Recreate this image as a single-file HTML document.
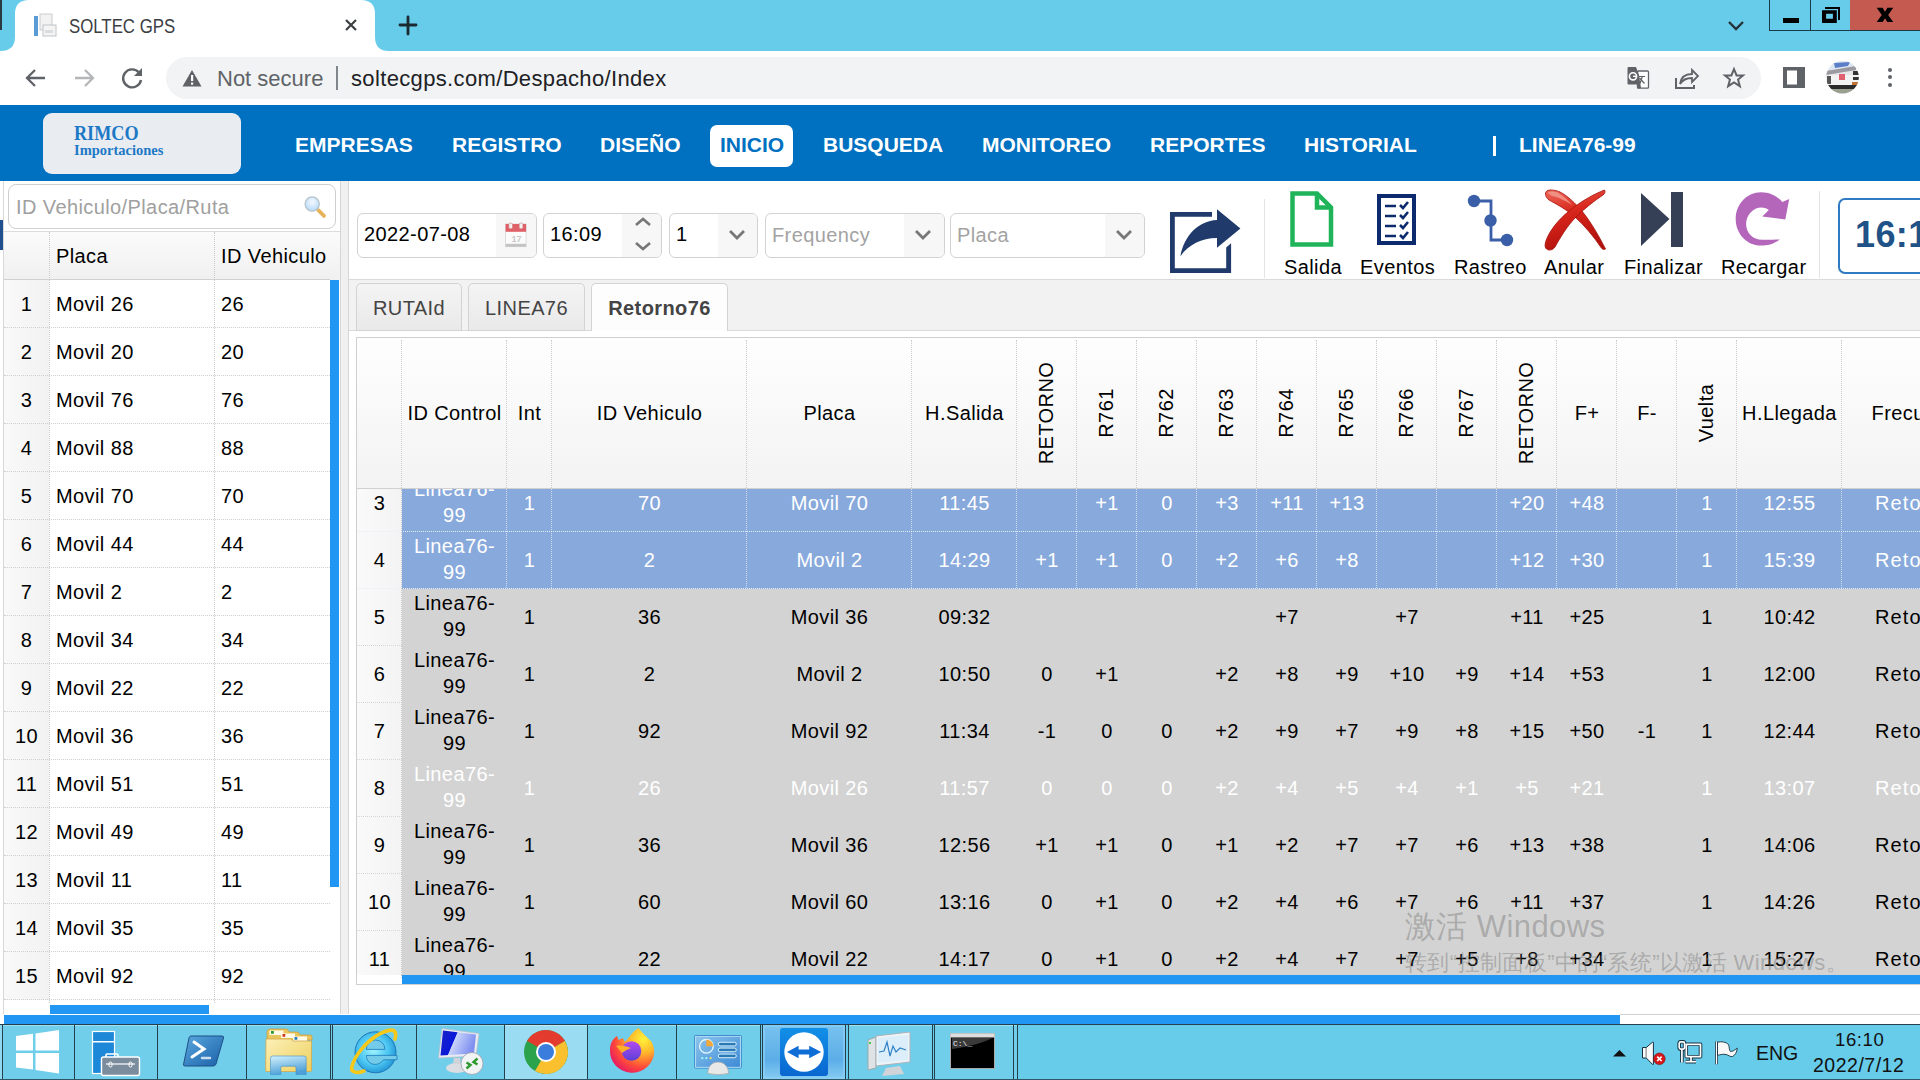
<!DOCTYPE html>
<html><head><meta charset="utf-8"><title>SOLTEC GPS</title>
<style>
*{margin:0;padding:0;box-sizing:border-box}
html,body{width:1920px;height:1080px;overflow:hidden;background:#fff;font-family:"Liberation Sans",sans-serif;color:#000}
.a{position:absolute}
.t{position:absolute;white-space:nowrap;line-height:1;letter-spacing:0.4px}
.nv{top:134px;font-size:21px;font-weight:bold;color:#fff;letter-spacing:0px}
</style></head><body>
<div class="a" style="left:0px;top:0px;width:1920px;height:51px;background:#67cbea"></div>
<div class="a" style="left:0px;top:0px;width:2px;height:30px;background:#2a3a40"></div>
<svg class="a" style="left:0;top:0" width="400" height="51"><path d="M0 51 Q15 51 15 37 L15 14 Q15 0 29 0 L361 0 Q375 0 375 14 L375 37 Q375 51 389 51 Z" fill="#fff"/></svg>
<svg class="a" style="left:32px;top:12px" width="26" height="26"><rect x="2" y="4" width="4" height="20" fill="#5b9bd5"/><rect x="8" y="2" width="12" height="16" fill="#f2f2f2" stroke="#c8ccd0"/><rect x="11" y="13" width="13" height="11" fill="#f4f4f4" stroke="#c0c4c8"/><rect x="13" y="18" width="8" height="3" fill="#d8dde2"/></svg>
<div class="t" style="left:69px;top:16px;font-size:20px;color:#3c4043;letter-spacing:0;transform:scaleX(0.84);transform-origin:0 0">SOLTEC GPS</div>
<svg class="a" style="left:344px;top:18px" width="14" height="14"><path d="M2 2L12 12M12 2L2 12" stroke="#3c4043" stroke-width="2.2"/></svg>
<svg class="a" style="left:397px;top:14px" width="22" height="22"><path d="M11 3V20M3 11H19" stroke="#1a2a30" stroke-width="2.8" stroke-linecap="round"/></svg>
<svg class="a" style="left:1727px;top:19px" width="18" height="13"><path d="M2 3L9 10L16 3" stroke="#263238" stroke-width="2.4" fill="none"/></svg>
<div class="a" style="left:1769px;top:0px;width:42px;height:31px;border:1px solid #1b3b4b;border-top:none;background:#67cbea"></div>
<div class="a" style="left:1783px;top:18px;width:16px;height:5px;background:#000"></div>
<div class="a" style="left:1811px;top:0px;width:40px;height:31px;border:1px solid #1b3b4b;border-top:none;border-left:none;background:#67cbea"></div>
<svg class="a" style="left:1810px;top:0px" width="40" height="30"><path d="M15 7H30V20H28V9H15Z" fill="#000"/><path d="M12 10.2H26.8V23H12Z M16.1 13.8V18.8H22.9V13.8Z" fill="#000" fill-rule="evenodd"/></svg>
<div class="a" style="left:1850px;top:0px;width:70px;height:31px;background:#c55a50;border-bottom:1px solid #1b3b4b"></div>
<svg class="a" style="left:1860px;top:0px" width="60" height="30"><path d="M16.7 7.8H22.6L25 11.8L27.4 7.8H33.2L28.2 15L33.2 22.1H27.3L25 18.2L22.7 22.1H16.7L21.8 15Z" fill="#000"/></svg>
<div class="a" style="left:0px;top:51px;width:1920px;height:54px;background:#fff"></div>
<svg class="a" style="left:24px;top:66px" width="24" height="24"><path d="M21 12H4M11 4L3 12L11 20" stroke="#5f6368" stroke-width="2.3" fill="none"/></svg>
<svg class="a" style="left:72px;top:66px" width="24" height="24"><path d="M3 12H20M13 4L21 12L13 20" stroke="#b4b6b9" stroke-width="2.3" fill="none"/></svg>
<svg class="a" style="left:120px;top:66px" width="26" height="24"><path d="M19 6.5A9 9 0 1 0 21 14" stroke="#5f6368" stroke-width="2.4" fill="none"/><path d="M22 2V10H14Z" fill="#5f6368"/></svg>
<div class="a" style="left:166px;top:57px;width:1595px;height:42px;background:#f1f3f4;border-radius:21px"></div>
<svg class="a" style="left:182px;top:69px" width="20" height="18"><path d="M10 1L19.5 17.5H0.5Z" fill="#5f6368"/><rect x="9" y="6" width="2.2" height="6" fill="#fff"/><rect x="9" y="13.5" width="2.2" height="2.2" fill="#fff"/></svg>
<div class="t" style="left:217px;top:68px;font-size:22px;color:#5f6368;letter-spacing:0">Not secure</div>
<div class="a" style="left:336px;top:66px;width:2px;height:24px;background:#80868b"></div>
<div class="t" style="left:351px;top:68px;font-size:22px;color:#202124;letter-spacing:0.35px">soltecgps.com/Despacho/Index</div>
<svg class="a" style="left:1620px;top:60px" width="40" height="35"><rect x="17.5" y="11" width="11" height="17.2" rx="1" fill="#fff" stroke="#5f6368" stroke-width="1.3"/><path d="M8.5 7.1H16L19 15L21 28L17.5 28.5L17 24.6H8.5Q7.5 24.6 7.5 23.6V8.1Q7.5 7.1 8.5 7.1Z" fill="#5f6368"/><circle cx="13" cy="16.3" r="3.6" fill="none" stroke="#fff" stroke-width="1.6"/><path d="M13 16.3H16.8" stroke="#fff" stroke-width="1.5"/><path d="M19 16.5H25M22.5 16L20 23.5M19.5 18L24.5 23.5" stroke="#5f6368" stroke-width="1.2" fill="none"/></svg>
<svg class="a" style="left:1674px;top:66px" width="26" height="24"><path d="M2 12V22H20V19" stroke="#5f6368" stroke-width="2" fill="none"/><path d="M6 18C7 11 12 8 18 8V4L24 10L18 16V12C13 12 9 13 6 18Z" fill="none" stroke="#5f6368" stroke-width="1.8"/></svg>
<svg class="a" style="left:1722px;top:66px" width="24" height="24"><path transform="translate(1.2 1.3) scale(0.9)" d="M12 2L14.9 9H22L16.5 13.6L18.5 21L12 16.8L5.5 21L7.5 13.6L2 9H9.1Z" fill="none" stroke="#5f6368" stroke-width="2.2" stroke-linejoin="miter"/></svg>
<svg class="a" style="left:1783px;top:67px" width="22" height="21"><rect x="0" y="0" width="22" height="21" fill="#5f6368"/><rect x="4" y="3.5" width="10" height="14" fill="#fff"/></svg>
<svg class="a" style="left:1826px;top:61px" width="34" height="34"><defs><clipPath id="av"><circle cx="16.5" cy="16.2" r="16.3"/></clipPath></defs><g clip-path="url(#av)"><rect width="34" height="34" fill="#e6e6e8"/><path d="M0 0H34V5L0 10Z" fill="#dfe6f2"/><path d="M8 2L24 1L22 5L9 7Z" fill="#5a7fc8"/><path d="M0 10L30 5V9L0 14Z" fill="#9a9aa0"/><rect x="0" y="14" width="34" height="10" fill="#f2f2f2"/><rect x="1" y="15" width="4" height="8" fill="#555"/><rect x="13" y="13" width="6" height="6" fill="#e06070"/><rect x="27" y="10" width="6" height="4" fill="#333"/><rect x="27" y="16" width="6" height="3" fill="#333"/><rect x="26" y="21" width="8" height="3" fill="#c07030"/><rect x="0" y="24" width="34" height="4" fill="#2a2a2a"/><rect x="0" y="28" width="34" height="6" fill="#9aa090"/></g></svg>
<div class="a" style="left:1888px;top:68px;width:4px;height:4px;background:#5f6368;border-radius:2px"></div>
<div class="a" style="left:1888px;top:75px;width:4px;height:4px;background:#5f6368;border-radius:2px"></div>
<div class="a" style="left:1888px;top:83px;width:4px;height:4px;background:#5f6368;border-radius:2px"></div>
<div class="a" style="left:0px;top:105px;width:1920px;height:76px;background:#0070c0"></div>
<div class="a" style="left:43px;top:113px;width:198px;height:61px;background:#e9edf2;border-radius:9px"></div>
<div class="t" style="left:74px;top:123px;font-family:'Liberation Serif',serif;font-weight:bold;font-size:21px;color:#1d78c6;letter-spacing:0;transform:scaleX(0.865);transform-origin:0 0">RIMCO</div>
<div class="t" style="left:74px;top:143px;font-family:'Liberation Serif',serif;font-weight:bold;font-size:14.5px;color:#1d78c6;letter-spacing:0">Importaciones</div>
<div class="t nv" style="left:295px">EMPRESAS</div>
<div class="t nv" style="left:452px">REGISTRO</div>
<div class="t nv" style="left:600px">DISEÑO</div>
<div class="t nv" style="left:823px">BUSQUEDA</div>
<div class="t nv" style="left:982px">MONITOREO</div>
<div class="t nv" style="left:1150px">REPORTES</div>
<div class="t nv" style="left:1304px">HISTORIAL</div>
<div class="t nv" style="left:1519px">LINEA76-99</div>
<div class="a" style="left:710px;top:125px;width:83px;height:42px;background:#fff;border-radius:7px"></div>
<div class="t nv" style="left:720px;color:#0070c0">INICIO</div>
<div class="a" style="left:1493px;top:136px;width:3px;height:20px;background:#fff"></div>
<div class="a" style="left:0px;top:181px;width:340px;height:834px;background:#fff"></div>
<div class="a" style="left:0px;top:220px;width:3px;height:30px;background:#1f4f8f"></div>
<div class="a" style="left:3px;top:181px;width:1px;height:834px;background:#d8d8d8"></div>
<div class="a" style="left:8px;top:184px;width:328px;height:45px;border:1px solid #cfcfcf;border-radius:8px;background:#fff"></div>
<div class="t" style="left:16px;top:197px;font-size:20px;color:#a0a0a0">ID Vehiculo/Placa/Ruta</div>
<svg class="a" style="left:290px;top:185px" width="45" height="45"><defs><radialGradient id="lens" cx="0.5" cy="0.35" r="0.6"><stop offset="0" stop-color="#f4f8ff"/><stop offset="1" stop-color="#b9dcf8"/></radialGradient></defs><path d="M28.3 25.2L34 30.9" stroke="#e5b45a" stroke-width="3.8" stroke-linecap="round"/><circle cx="22.2" cy="19" r="7.1" fill="url(#lens)" stroke="#b5c2cc" stroke-width="1.3"/></svg>
<div class="a" style="left:4px;top:231px;width:336px;height:1px;background:#dcdcdc"></div>
<div class="a" style="left:4px;top:232px;width:326px;height:48px;background:linear-gradient(#fbfbfb,#f0f0f0)"></div>
<div class="a" style="left:4px;top:279px;width:336px;height:1px;background:#d0d0d0"></div>
<div class="t" style="left:56px;top:246px;font-size:20px">Placa</div>
<div class="t" style="left:221px;top:246px;font-size:20px">ID Vehiculo</div>
<div class="a" style="left:49px;top:232px;width:0px;height:48px;border-left:1px dotted #c8c8c8"></div>
<div class="a" style="left:214px;top:232px;width:0px;height:48px;border-left:1px dotted #c8c8c8"></div>
<div class="a" style="left:330px;top:232px;width:10px;height:48px;background:linear-gradient(#fbfbfb,#f0f0f0)"></div>
<div class="a" style="left:4px;top:280px;width:45px;height:48px;background:linear-gradient(90deg,#f9f9f9,#f2f2f2)"></div>
<div class="a" style="left:4px;top:327px;width:326px;height:0px;border-top:1px dotted #cfcfcf"></div>
<div class="t" style="left:4px;top:294px;width:45px;text-align:center;font-size:20px">1</div>
<div class="t" style="left:56px;top:294px;font-size:20px">Movil 26</div>
<div class="t" style="left:221px;top:294px;font-size:20px">26</div>
<div class="a" style="left:4px;top:328px;width:45px;height:48px;background:linear-gradient(90deg,#f9f9f9,#f2f2f2)"></div>
<div class="a" style="left:4px;top:375px;width:326px;height:0px;border-top:1px dotted #cfcfcf"></div>
<div class="t" style="left:4px;top:342px;width:45px;text-align:center;font-size:20px">2</div>
<div class="t" style="left:56px;top:342px;font-size:20px">Movil 20</div>
<div class="t" style="left:221px;top:342px;font-size:20px">20</div>
<div class="a" style="left:4px;top:376px;width:45px;height:48px;background:linear-gradient(90deg,#f9f9f9,#f2f2f2)"></div>
<div class="a" style="left:4px;top:423px;width:326px;height:0px;border-top:1px dotted #cfcfcf"></div>
<div class="t" style="left:4px;top:390px;width:45px;text-align:center;font-size:20px">3</div>
<div class="t" style="left:56px;top:390px;font-size:20px">Movil 76</div>
<div class="t" style="left:221px;top:390px;font-size:20px">76</div>
<div class="a" style="left:4px;top:424px;width:45px;height:48px;background:linear-gradient(90deg,#f9f9f9,#f2f2f2)"></div>
<div class="a" style="left:4px;top:471px;width:326px;height:0px;border-top:1px dotted #cfcfcf"></div>
<div class="t" style="left:4px;top:438px;width:45px;text-align:center;font-size:20px">4</div>
<div class="t" style="left:56px;top:438px;font-size:20px">Movil 88</div>
<div class="t" style="left:221px;top:438px;font-size:20px">88</div>
<div class="a" style="left:4px;top:472px;width:45px;height:48px;background:linear-gradient(90deg,#f9f9f9,#f2f2f2)"></div>
<div class="a" style="left:4px;top:519px;width:326px;height:0px;border-top:1px dotted #cfcfcf"></div>
<div class="t" style="left:4px;top:486px;width:45px;text-align:center;font-size:20px">5</div>
<div class="t" style="left:56px;top:486px;font-size:20px">Movil 70</div>
<div class="t" style="left:221px;top:486px;font-size:20px">70</div>
<div class="a" style="left:4px;top:520px;width:45px;height:48px;background:linear-gradient(90deg,#f9f9f9,#f2f2f2)"></div>
<div class="a" style="left:4px;top:567px;width:326px;height:0px;border-top:1px dotted #cfcfcf"></div>
<div class="t" style="left:4px;top:534px;width:45px;text-align:center;font-size:20px">6</div>
<div class="t" style="left:56px;top:534px;font-size:20px">Movil 44</div>
<div class="t" style="left:221px;top:534px;font-size:20px">44</div>
<div class="a" style="left:4px;top:568px;width:45px;height:48px;background:linear-gradient(90deg,#f9f9f9,#f2f2f2)"></div>
<div class="a" style="left:4px;top:615px;width:326px;height:0px;border-top:1px dotted #cfcfcf"></div>
<div class="t" style="left:4px;top:582px;width:45px;text-align:center;font-size:20px">7</div>
<div class="t" style="left:56px;top:582px;font-size:20px">Movil 2</div>
<div class="t" style="left:221px;top:582px;font-size:20px">2</div>
<div class="a" style="left:4px;top:616px;width:45px;height:48px;background:linear-gradient(90deg,#f9f9f9,#f2f2f2)"></div>
<div class="a" style="left:4px;top:663px;width:326px;height:0px;border-top:1px dotted #cfcfcf"></div>
<div class="t" style="left:4px;top:630px;width:45px;text-align:center;font-size:20px">8</div>
<div class="t" style="left:56px;top:630px;font-size:20px">Movil 34</div>
<div class="t" style="left:221px;top:630px;font-size:20px">34</div>
<div class="a" style="left:4px;top:664px;width:45px;height:48px;background:linear-gradient(90deg,#f9f9f9,#f2f2f2)"></div>
<div class="a" style="left:4px;top:711px;width:326px;height:0px;border-top:1px dotted #cfcfcf"></div>
<div class="t" style="left:4px;top:678px;width:45px;text-align:center;font-size:20px">9</div>
<div class="t" style="left:56px;top:678px;font-size:20px">Movil 22</div>
<div class="t" style="left:221px;top:678px;font-size:20px">22</div>
<div class="a" style="left:4px;top:712px;width:45px;height:48px;background:linear-gradient(90deg,#f9f9f9,#f2f2f2)"></div>
<div class="a" style="left:4px;top:759px;width:326px;height:0px;border-top:1px dotted #cfcfcf"></div>
<div class="t" style="left:4px;top:726px;width:45px;text-align:center;font-size:20px">10</div>
<div class="t" style="left:56px;top:726px;font-size:20px">Movil 36</div>
<div class="t" style="left:221px;top:726px;font-size:20px">36</div>
<div class="a" style="left:4px;top:760px;width:45px;height:48px;background:linear-gradient(90deg,#f9f9f9,#f2f2f2)"></div>
<div class="a" style="left:4px;top:807px;width:326px;height:0px;border-top:1px dotted #cfcfcf"></div>
<div class="t" style="left:4px;top:774px;width:45px;text-align:center;font-size:20px">11</div>
<div class="t" style="left:56px;top:774px;font-size:20px">Movil 51</div>
<div class="t" style="left:221px;top:774px;font-size:20px">51</div>
<div class="a" style="left:4px;top:808px;width:45px;height:48px;background:linear-gradient(90deg,#f9f9f9,#f2f2f2)"></div>
<div class="a" style="left:4px;top:855px;width:326px;height:0px;border-top:1px dotted #cfcfcf"></div>
<div class="t" style="left:4px;top:822px;width:45px;text-align:center;font-size:20px">12</div>
<div class="t" style="left:56px;top:822px;font-size:20px">Movil 49</div>
<div class="t" style="left:221px;top:822px;font-size:20px">49</div>
<div class="a" style="left:4px;top:856px;width:45px;height:48px;background:linear-gradient(90deg,#f9f9f9,#f2f2f2)"></div>
<div class="a" style="left:4px;top:903px;width:326px;height:0px;border-top:1px dotted #cfcfcf"></div>
<div class="t" style="left:4px;top:870px;width:45px;text-align:center;font-size:20px">13</div>
<div class="t" style="left:56px;top:870px;font-size:20px">Movil 11</div>
<div class="t" style="left:221px;top:870px;font-size:20px">11</div>
<div class="a" style="left:4px;top:904px;width:45px;height:48px;background:linear-gradient(90deg,#f9f9f9,#f2f2f2)"></div>
<div class="a" style="left:4px;top:951px;width:326px;height:0px;border-top:1px dotted #cfcfcf"></div>
<div class="t" style="left:4px;top:918px;width:45px;text-align:center;font-size:20px">14</div>
<div class="t" style="left:56px;top:918px;font-size:20px">Movil 35</div>
<div class="t" style="left:221px;top:918px;font-size:20px">35</div>
<div class="a" style="left:4px;top:952px;width:45px;height:48px;background:linear-gradient(90deg,#f9f9f9,#f2f2f2)"></div>
<div class="a" style="left:4px;top:999px;width:326px;height:0px;border-top:1px dotted #cfcfcf"></div>
<div class="t" style="left:4px;top:966px;width:45px;text-align:center;font-size:20px">15</div>
<div class="t" style="left:56px;top:966px;font-size:20px">Movil 92</div>
<div class="t" style="left:221px;top:966px;font-size:20px">92</div>
<div class="a" style="left:49px;top:280px;width:0px;height:723px;border-left:1px dotted #cfcfcf"></div>
<div class="a" style="left:214px;top:280px;width:0px;height:723px;border-left:1px dotted #cfcfcf"></div>
<div class="a" style="left:330px;top:280px;width:9px;height:607px;background:#2196f3"></div>
<div class="a" style="left:50px;top:1005px;width:159px;height:9px;background:#2196f3"></div>
<div class="a" style="left:340px;top:181px;width:9px;height:834px;background:#f0f0f0;border-left:1px solid #d6d6d6;border-right:1px solid #d6d6d6"></div>
<div class="a" style="left:349px;top:181px;width:1571px;height:98px;background:#fff"></div>
<div class="a" style="left:357px;top:213px;width:180px;height:45px;border:1px solid #d2d2d2;border-radius:6px;background:#fff;overflow:hidden"></div>
<div class="a" style="left:496px;top:214px;width:40px;height:43px;background:#f7f7f7;border-radius:0 5px 5px 0"></div>
<div class="t" style="left:364px;top:224px;font-size:20px;color:#000">2022-07-08</div>
<svg class="a" style="left:495px;top:213px" width="40" height="44"><rect x="10.6" y="11" width="20.5" height="22.7" fill="#fbfbfb" stroke="#d0d0d0" stroke-width="0.7"/><rect x="10.6" y="30.8" width="20.5" height="3" fill="#c4c4c4"/><rect x="10.6" y="11" width="20.5" height="7.8" fill="#e06068"/><rect x="13.8" y="10" width="3.7" height="5.8" rx="1.5" fill="#f4f0f0" stroke="#c07070" stroke-width="0.5"/><rect x="24.2" y="10" width="3.7" height="5.8" rx="1.5" fill="#f4f0f0" stroke="#c07070" stroke-width="0.5"/><text x="16.5" y="28.5" font-size="9" fill="#c8c8c8" font-family="Liberation Sans" font-weight="bold">17</text></svg>
<div class="a" style="left:543px;top:213px;width:119px;height:45px;border:1px solid #d2d2d2;border-radius:6px;background:#fff;overflow:hidden"></div>
<div class="a" style="left:622px;top:214px;width:39px;height:43px;background:#f7f7f7;border-radius:0 5px 5px 0"></div>
<div class="t" style="left:550px;top:224px;font-size:20px;color:#000">16:09</div>
<svg class="a" style="left:633px;top:216px" width="20" height="38"><path d="M3 9L10 3L17 9M3 27L10 33L17 27" stroke="#777" stroke-width="2.6" fill="none"/></svg>
<div class="a" style="left:669px;top:213px;width:89px;height:45px;border:1px solid #d2d2d2;border-radius:6px;background:#fff;overflow:hidden"></div>
<div class="a" style="left:718px;top:214px;width:39px;height:43px;background:#f7f7f7;border-radius:0 5px 5px 0"></div>
<div class="t" style="left:676px;top:224px;font-size:20px;color:#000">1</div>
<div class="a" style="left:765px;top:213px;width:180px;height:45px;border:1px solid #d2d2d2;border-radius:6px;background:#fff;overflow:hidden"></div>
<div class="a" style="left:904px;top:214px;width:40px;height:43px;background:#f7f7f7;border-radius:0 5px 5px 0"></div>
<div class="t" style="left:772px;top:225px;font-size:20px;color:#a3a3a3">Frequency</div>
<div class="a" style="left:950px;top:213px;width:195px;height:45px;border:1px solid #d2d2d2;border-radius:6px;background:#fff;overflow:hidden"></div>
<div class="a" style="left:1105px;top:214px;width:39px;height:43px;background:#f7f7f7;border-radius:0 5px 5px 0"></div>
<div class="t" style="left:957px;top:225px;font-size:20px;color:#a3a3a3">Placa</div>
<svg class="a" style="left:727px;top:228px" width="20" height="14"><path d="M3 3L10 10L17 3" stroke="#777" stroke-width="2.8" fill="none"/></svg>
<svg class="a" style="left:913px;top:228px" width="20" height="14"><path d="M3 3L10 10L17 3" stroke="#777" stroke-width="2.8" fill="none"/></svg>
<svg class="a" style="left:1114px;top:228px" width="20" height="14"><path d="M3 3L10 10L17 3" stroke="#777" stroke-width="2.8" fill="none"/></svg>
<svg class="a" style="left:1160px;top:200px" width="90" height="80"><path d="M10 12H52V16.8H14.8V68.2H66.2V47.4L71.1 43.3V73H10Z" fill="#1f3a6b"/><path d="M20.4 56.3C24 36 38 21 57 20V9.3L80.4 28.5L57 47.8V38.1C42 38 28 45 20.4 56.3Z" fill="#1f3a6b"/></svg>
<div class="a" style="left:1264px;top:199px;width:1px;height:79px;background:#e3e3e3"></div>
<svg class="a" style="left:1288px;top:189px" width="48" height="60"><path d="M4.5 4.5H29L43 18.5V55.5H4.5Z" fill="#fff" stroke="#1fb45a" stroke-width="4.5" stroke-linejoin="miter"/><path d="M29 4.5V18.5H43" fill="none" stroke="#1fb45a" stroke-width="4.5"/></svg>
<svg class="a" style="left:1376px;top:193px" width="42" height="54"><rect x="3" y="3" width="35" height="47" fill="#fff" stroke="#0d2a6e" stroke-width="4"/><g stroke="#0d2a6e" stroke-width="2.6" fill="none"><path d="M9 13H20M9 23H20M9 33H20M9 43H20"/><path d="M24 12L27 15L32 9M24 22L27 25L32 19M24 32L27 35L32 29M24 42L27 45L32 39"/></g></svg>
<svg class="a" style="left:1464px;top:192px" width="52" height="58"><path d="M10 9H27V48H43" stroke="#3a5fa8" stroke-width="2.8" fill="none"/><circle cx="10" cy="9" r="6.2" fill="#3a5fa8"/><circle cx="26.5" cy="28.5" r="6.2" fill="#3a5fa8"/><circle cx="43" cy="48" r="6.2" fill="#3a5fa8"/></svg>
<svg class="a" style="left:1538px;top:184px" width="74" height="70"><defs><linearGradient id="rg" x1="0" y1="0" x2="0.3" y2="1"><stop offset="0" stop-color="#ee6a5c"/><stop offset="0.45" stop-color="#d8261c"/><stop offset="1" stop-color="#b3120d"/></linearGradient></defs><g fill="url(#rg)" stroke="#a5100b" stroke-width="0.8"><path d="M7.5 10C7 5 15 5 22 8C30 12 38 20 44 27C52 37 60 50 67.5 65C65.5 66 64 65 63 63.5C56 53 47 42 37 33C28 25 18 20 11 16C9 14.5 7.7 12.5 7.5 10Z"/><path d="M66.5 6C67.5 7.5 67 9.5 65 11C56 17 46 25 38 33C29 42 22 54 17 63C15 66 11 67 8.5 65C6 63 7 58 10 52C15 42 24 32 35 24C44 17 56 10 66.5 6Z"/></g><path d="M10 9C12 7 17 7 22 10C27 13 31 17 34 21C28 17 20 13 14 12Z" fill="#f5a59a" opacity="0.7"/></svg>
<svg class="a" style="left:1638px;top:190px" width="48" height="60"><path d="M3 3L31.5 29L3 56Z" fill="#353f55"/><rect x="33" y="2" width="12" height="55" fill="#353f55"/></svg>
<svg class="a" style="left:1726px;top:186px" width="74" height="70"><path d="M53.8 53.5C47 58.5 41 59.6 35 59.6C20 59.6 9.7 47 9.7 33C9.7 18 21 6.2 35 6.2C44 6.2 51 10 56.4 15.9L63.2 13L59.3 33.4L36.3 30.5L42.8 24C40 22 38 21.4 35.5 21.4C27 21.4 20.1 29 20.1 38C20.1 47 27 53.8 36 53.8C44 53.8 49 53.6 53.8 53.5Z" fill="#b466ba"/></svg>
<div class="t" style="left:1284px;top:257px;font-size:20px">Salida</div>
<div class="t" style="left:1360px;top:257px;font-size:20px">Eventos</div>
<div class="t" style="left:1454px;top:257px;font-size:20px">Rastreo</div>
<div class="t" style="left:1544px;top:257px;font-size:20px">Anular</div>
<div class="t" style="left:1624px;top:257px;font-size:20px">Finalizar</div>
<div class="t" style="left:1721px;top:257px;font-size:20px">Recargar</div>
<div class="a" style="left:1819px;top:191px;width:1px;height:87px;background:#e3e3e3"></div>
<div class="a" style="left:1838px;top:198px;width:100px;height:76px;border:2px solid #2e7bc4;border-radius:7px;background:#fff"></div>
<div class="t" style="left:1855px;top:217px;font-size:36px;font-weight:bold;color:#1f5287">16:10</div>
<div class="a" style="left:349px;top:279px;width:1571px;height:51px;background:#f2f2f2;border-top:1px solid #dadada"></div>
<div class="a" style="left:349px;top:330px;width:1571px;height:1px;background:#d9d9d9"></div>
<div class="a" style="left:356px;top:283px;width:106px;height:48px;background:linear-gradient(#f4f4f4,#e9e9e9);border:1px solid #d3d3d3;border-radius:5px 5px 0 0"></div>
<div class="t" style="left:356px;top:298px;width:106px;text-align:center;font-size:20px;color:#444;">RUTAId</div>
<div class="a" style="left:468px;top:283px;width:117px;height:48px;background:linear-gradient(#f4f4f4,#e9e9e9);border:1px solid #d3d3d3;border-radius:5px 5px 0 0"></div>
<div class="t" style="left:468px;top:298px;width:117px;text-align:center;font-size:20px;color:#444;">LINEA76</div>
<div class="a" style="left:591px;top:283px;width:137px;border-bottom:none;height:48px;background:#fdfdfd;border:1px solid #d3d3d3;border-bottom:none;border-radius:5px 5px 0 0"></div>
<div class="t" style="left:591px;top:298px;width:137px;text-align:center;font-size:20px;color:#444;font-weight:bold;">Retorno76</div>
<div class="a" style="left:349px;top:331px;width:1571px;height:684px;background:#fff"></div>
<div class="a" style="left:356px;top:337px;width:1564px;height:648px;border:1px solid #d0d0d0;border-right:none;background:#fff;overflow:hidden">
<div class="a" style="left:0px;top:0px;width:1563px;height:150px;background:linear-gradient(#fefefe,#f3f3f3)"></div>
<div class="a" style="left:0px;top:150px;width:1563px;height:1px;background:#d0d0d0"></div>
<div class="t" style="left:45px;top:65px;width:105px;text-align:center;font-size:20px">ID Control</div>
<div class="t" style="left:150px;top:65px;width:45px;text-align:center;font-size:20px">Int</div>
<div class="t" style="left:195px;top:65px;width:195px;text-align:center;font-size:20px">ID Vehiculo</div>
<div class="t" style="left:390px;top:65px;width:165px;text-align:center;font-size:20px">Placa</div>
<div class="t" style="left:555px;top:65px;width:105px;text-align:center;font-size:20px">H.Salida</div>
<div class="t" style="left:589.0px;top:65px;width:200px;height:20px;text-align:center;font-size:20px;transform:rotate(-90deg)">RETORNO</div>
<div class="t" style="left:649.0px;top:65px;width:200px;height:20px;text-align:center;font-size:20px;transform:rotate(-90deg)">R761</div>
<div class="t" style="left:709.0px;top:65px;width:200px;height:20px;text-align:center;font-size:20px;transform:rotate(-90deg)">R762</div>
<div class="t" style="left:769.0px;top:65px;width:200px;height:20px;text-align:center;font-size:20px;transform:rotate(-90deg)">R763</div>
<div class="t" style="left:829.0px;top:65px;width:200px;height:20px;text-align:center;font-size:20px;transform:rotate(-90deg)">R764</div>
<div class="t" style="left:889.0px;top:65px;width:200px;height:20px;text-align:center;font-size:20px;transform:rotate(-90deg)">R765</div>
<div class="t" style="left:949.0px;top:65px;width:200px;height:20px;text-align:center;font-size:20px;transform:rotate(-90deg)">R766</div>
<div class="t" style="left:1009.0px;top:65px;width:200px;height:20px;text-align:center;font-size:20px;transform:rotate(-90deg)">R767</div>
<div class="t" style="left:1069.0px;top:65px;width:200px;height:20px;text-align:center;font-size:20px;transform:rotate(-90deg)">RETORNO</div>
<div class="t" style="left:1200px;top:65px;width:60px;text-align:center;font-size:20px">F+</div>
<div class="t" style="left:1260px;top:65px;width:60px;text-align:center;font-size:20px">F-</div>
<div class="t" style="left:1249.0px;top:65px;width:200px;height:20px;text-align:center;font-size:20px;transform:rotate(-90deg)">Vuelta</div>
<div class="t" style="left:1380px;top:65px;width:105px;text-align:center;font-size:20px">H.Llegada</div>
<div class="t" style="left:1485px;top:65px;width:162px;text-align:center;font-size:20px">Frecuencia</div>
<div class="a" style="left:44px;top:2px;width:0px;height:638px;border-left:1px dotted #cdcdcd"></div>
<div class="a" style="left:149px;top:2px;width:0px;height:638px;border-left:1px dotted #cdcdcd"></div>
<div class="a" style="left:194px;top:2px;width:0px;height:638px;border-left:1px dotted #cdcdcd"></div>
<div class="a" style="left:389px;top:2px;width:0px;height:638px;border-left:1px dotted #cdcdcd"></div>
<div class="a" style="left:554px;top:2px;width:0px;height:638px;border-left:1px dotted #cdcdcd"></div>
<div class="a" style="left:659px;top:2px;width:0px;height:638px;border-left:1px dotted #cdcdcd"></div>
<div class="a" style="left:719px;top:2px;width:0px;height:638px;border-left:1px dotted #cdcdcd"></div>
<div class="a" style="left:779px;top:2px;width:0px;height:638px;border-left:1px dotted #cdcdcd"></div>
<div class="a" style="left:839px;top:2px;width:0px;height:638px;border-left:1px dotted #cdcdcd"></div>
<div class="a" style="left:899px;top:2px;width:0px;height:638px;border-left:1px dotted #cdcdcd"></div>
<div class="a" style="left:959px;top:2px;width:0px;height:638px;border-left:1px dotted #cdcdcd"></div>
<div class="a" style="left:1019px;top:2px;width:0px;height:638px;border-left:1px dotted #cdcdcd"></div>
<div class="a" style="left:1079px;top:2px;width:0px;height:638px;border-left:1px dotted #cdcdcd"></div>
<div class="a" style="left:1139px;top:2px;width:0px;height:638px;border-left:1px dotted #cdcdcd"></div>
<div class="a" style="left:1199px;top:2px;width:0px;height:638px;border-left:1px dotted #cdcdcd"></div>
<div class="a" style="left:1259px;top:2px;width:0px;height:638px;border-left:1px dotted #cdcdcd"></div>
<div class="a" style="left:1319px;top:2px;width:0px;height:638px;border-left:1px dotted #cdcdcd"></div>
<div class="a" style="left:1379px;top:2px;width:0px;height:638px;border-left:1px dotted #cdcdcd"></div>
<div class="a" style="left:1484px;top:2px;width:0px;height:638px;border-left:1px dotted #cdcdcd"></div>
<div class="a" style="left:0;top:151px;width:1563px;height:486px;overflow:hidden">
<div class="a" style="left:0;top:-14px;width:45px;height:57px;background:linear-gradient(90deg,#fafafa,#f3f3f3)"></div>
<div class="a" style="left:45px;top:-14px;width:1518px;height:57px;background:#88a9db"></div>
<div class="a" style="left:0;top:42px;width:1563px;height:0;border-top:1px dotted #e8eef8"></div>
<div class="t" style="left:0;top:4px;width:45px;text-align:center;font-size:20px">3</div>
<div class="t" style="left:45px;top:-13px;width:105px;text-align:center;font-size:20px;line-height:26.4px;color:#fff;">Linea76-<br>99</div>
<div class="t" style="left:150px;top:4px;width:45px;text-align:center;font-size:20px;color:#fff;">1</div>
<div class="t" style="left:195px;top:4px;width:195px;text-align:center;font-size:20px;color:#fff;">70</div>
<div class="t" style="left:390px;top:4px;width:165px;text-align:center;font-size:20px;color:#fff;">Movil 70</div>
<div class="t" style="left:555px;top:4px;width:105px;text-align:center;font-size:20px;color:#fff;">11:45</div>
<div class="t" style="left:660px;top:4px;width:60px;text-align:center;font-size:20px;color:#fff;"></div>
<div class="t" style="left:720px;top:4px;width:60px;text-align:center;font-size:20px;color:#fff;">+1</div>
<div class="t" style="left:780px;top:4px;width:60px;text-align:center;font-size:20px;color:#fff;">0</div>
<div class="t" style="left:840px;top:4px;width:60px;text-align:center;font-size:20px;color:#fff;">+3</div>
<div class="t" style="left:900px;top:4px;width:60px;text-align:center;font-size:20px;color:#fff;">+11</div>
<div class="t" style="left:960px;top:4px;width:60px;text-align:center;font-size:20px;color:#fff;">+13</div>
<div class="t" style="left:1020px;top:4px;width:60px;text-align:center;font-size:20px;color:#fff;"></div>
<div class="t" style="left:1080px;top:4px;width:60px;text-align:center;font-size:20px;color:#fff;"></div>
<div class="t" style="left:1140px;top:4px;width:60px;text-align:center;font-size:20px;color:#fff;">+20</div>
<div class="t" style="left:1200px;top:4px;width:60px;text-align:center;font-size:20px;color:#fff;">+48</div>
<div class="t" style="left:1260px;top:4px;width:60px;text-align:center;font-size:20px;color:#fff;"></div>
<div class="t" style="left:1320px;top:4px;width:60px;text-align:center;font-size:20px;color:#fff;">1</div>
<div class="t" style="left:1380px;top:4px;width:105px;text-align:center;font-size:20px;color:#fff;">12:55</div>
<div class="t" style="left:1518px;top:4px;font-size:20px;letter-spacing:1.1px;color:#fff">Retorno76</div>
<div class="a" style="left:0;top:43px;width:45px;height:57px;background:linear-gradient(90deg,#fafafa,#f3f3f3)"></div>
<div class="a" style="left:45px;top:43px;width:1518px;height:57px;background:#88a9db"></div>
<div class="a" style="left:0;top:99px;width:1563px;height:0;border-top:1px dotted #e8eef8"></div>
<div class="t" style="left:0;top:61px;width:45px;text-align:center;font-size:20px">4</div>
<div class="t" style="left:45px;top:44px;width:105px;text-align:center;font-size:20px;line-height:26.4px;color:#fff;">Linea76-<br>99</div>
<div class="t" style="left:150px;top:61px;width:45px;text-align:center;font-size:20px;color:#fff;">1</div>
<div class="t" style="left:195px;top:61px;width:195px;text-align:center;font-size:20px;color:#fff;">2</div>
<div class="t" style="left:390px;top:61px;width:165px;text-align:center;font-size:20px;color:#fff;">Movil 2</div>
<div class="t" style="left:555px;top:61px;width:105px;text-align:center;font-size:20px;color:#fff;">14:29</div>
<div class="t" style="left:660px;top:61px;width:60px;text-align:center;font-size:20px;color:#fff;">+1</div>
<div class="t" style="left:720px;top:61px;width:60px;text-align:center;font-size:20px;color:#fff;">+1</div>
<div class="t" style="left:780px;top:61px;width:60px;text-align:center;font-size:20px;color:#fff;">0</div>
<div class="t" style="left:840px;top:61px;width:60px;text-align:center;font-size:20px;color:#fff;">+2</div>
<div class="t" style="left:900px;top:61px;width:60px;text-align:center;font-size:20px;color:#fff;">+6</div>
<div class="t" style="left:960px;top:61px;width:60px;text-align:center;font-size:20px;color:#fff;">+8</div>
<div class="t" style="left:1020px;top:61px;width:60px;text-align:center;font-size:20px;color:#fff;"></div>
<div class="t" style="left:1080px;top:61px;width:60px;text-align:center;font-size:20px;color:#fff;"></div>
<div class="t" style="left:1140px;top:61px;width:60px;text-align:center;font-size:20px;color:#fff;">+12</div>
<div class="t" style="left:1200px;top:61px;width:60px;text-align:center;font-size:20px;color:#fff;">+30</div>
<div class="t" style="left:1260px;top:61px;width:60px;text-align:center;font-size:20px;color:#fff;"></div>
<div class="t" style="left:1320px;top:61px;width:60px;text-align:center;font-size:20px;color:#fff;">1</div>
<div class="t" style="left:1380px;top:61px;width:105px;text-align:center;font-size:20px;color:#fff;">15:39</div>
<div class="t" style="left:1518px;top:61px;font-size:20px;letter-spacing:1.1px;color:#fff">Retorno76</div>
<div class="a" style="left:0;top:100px;width:45px;height:57px;background:linear-gradient(90deg,#fafafa,#f3f3f3)"></div>
<div class="a" style="left:45px;top:100px;width:1518px;height:57px;background:#d3d3d3"></div>
<div class="a" style="left:0;top:156px;width:1563px;height:0;border-top:1px dotted #d6d6d6"></div>
<div class="t" style="left:0;top:118px;width:45px;text-align:center;font-size:20px">5</div>
<div class="t" style="left:45px;top:101px;width:105px;text-align:center;font-size:20px;line-height:26.4px;color:#000;">Linea76-<br>99</div>
<div class="t" style="left:150px;top:118px;width:45px;text-align:center;font-size:20px;color:#000;">1</div>
<div class="t" style="left:195px;top:118px;width:195px;text-align:center;font-size:20px;color:#000;">36</div>
<div class="t" style="left:390px;top:118px;width:165px;text-align:center;font-size:20px;color:#000;">Movil 36</div>
<div class="t" style="left:555px;top:118px;width:105px;text-align:center;font-size:20px;color:#000;">09:32</div>
<div class="t" style="left:660px;top:118px;width:60px;text-align:center;font-size:20px;color:#000;"></div>
<div class="t" style="left:720px;top:118px;width:60px;text-align:center;font-size:20px;color:#000;"></div>
<div class="t" style="left:780px;top:118px;width:60px;text-align:center;font-size:20px;color:#000;"></div>
<div class="t" style="left:840px;top:118px;width:60px;text-align:center;font-size:20px;color:#000;"></div>
<div class="t" style="left:900px;top:118px;width:60px;text-align:center;font-size:20px;color:#000;">+7</div>
<div class="t" style="left:960px;top:118px;width:60px;text-align:center;font-size:20px;color:#000;"></div>
<div class="t" style="left:1020px;top:118px;width:60px;text-align:center;font-size:20px;color:#000;">+7</div>
<div class="t" style="left:1080px;top:118px;width:60px;text-align:center;font-size:20px;color:#000;"></div>
<div class="t" style="left:1140px;top:118px;width:60px;text-align:center;font-size:20px;color:#000;">+11</div>
<div class="t" style="left:1200px;top:118px;width:60px;text-align:center;font-size:20px;color:#000;">+25</div>
<div class="t" style="left:1260px;top:118px;width:60px;text-align:center;font-size:20px;color:#000;"></div>
<div class="t" style="left:1320px;top:118px;width:60px;text-align:center;font-size:20px;color:#000;">1</div>
<div class="t" style="left:1380px;top:118px;width:105px;text-align:center;font-size:20px;color:#000;">10:42</div>
<div class="t" style="left:1518px;top:118px;font-size:20px;letter-spacing:1.1px;color:#000">Retorno76</div>
<div class="a" style="left:0;top:157px;width:45px;height:57px;background:linear-gradient(90deg,#fafafa,#f3f3f3)"></div>
<div class="a" style="left:45px;top:157px;width:1518px;height:57px;background:#d3d3d3"></div>
<div class="a" style="left:0;top:213px;width:1563px;height:0;border-top:1px dotted #d6d6d6"></div>
<div class="t" style="left:0;top:175px;width:45px;text-align:center;font-size:20px">6</div>
<div class="t" style="left:45px;top:158px;width:105px;text-align:center;font-size:20px;line-height:26.4px;color:#000;">Linea76-<br>99</div>
<div class="t" style="left:150px;top:175px;width:45px;text-align:center;font-size:20px;color:#000;">1</div>
<div class="t" style="left:195px;top:175px;width:195px;text-align:center;font-size:20px;color:#000;">2</div>
<div class="t" style="left:390px;top:175px;width:165px;text-align:center;font-size:20px;color:#000;">Movil 2</div>
<div class="t" style="left:555px;top:175px;width:105px;text-align:center;font-size:20px;color:#000;">10:50</div>
<div class="t" style="left:660px;top:175px;width:60px;text-align:center;font-size:20px;color:#000;">0</div>
<div class="t" style="left:720px;top:175px;width:60px;text-align:center;font-size:20px;color:#000;">+1</div>
<div class="t" style="left:780px;top:175px;width:60px;text-align:center;font-size:20px;color:#000;"></div>
<div class="t" style="left:840px;top:175px;width:60px;text-align:center;font-size:20px;color:#000;">+2</div>
<div class="t" style="left:900px;top:175px;width:60px;text-align:center;font-size:20px;color:#000;">+8</div>
<div class="t" style="left:960px;top:175px;width:60px;text-align:center;font-size:20px;color:#000;">+9</div>
<div class="t" style="left:1020px;top:175px;width:60px;text-align:center;font-size:20px;color:#000;">+10</div>
<div class="t" style="left:1080px;top:175px;width:60px;text-align:center;font-size:20px;color:#000;">+9</div>
<div class="t" style="left:1140px;top:175px;width:60px;text-align:center;font-size:20px;color:#000;">+14</div>
<div class="t" style="left:1200px;top:175px;width:60px;text-align:center;font-size:20px;color:#000;">+53</div>
<div class="t" style="left:1260px;top:175px;width:60px;text-align:center;font-size:20px;color:#000;"></div>
<div class="t" style="left:1320px;top:175px;width:60px;text-align:center;font-size:20px;color:#000;">1</div>
<div class="t" style="left:1380px;top:175px;width:105px;text-align:center;font-size:20px;color:#000;">12:00</div>
<div class="t" style="left:1518px;top:175px;font-size:20px;letter-spacing:1.1px;color:#000">Retorno76</div>
<div class="a" style="left:0;top:214px;width:45px;height:57px;background:linear-gradient(90deg,#fafafa,#f3f3f3)"></div>
<div class="a" style="left:45px;top:214px;width:1518px;height:57px;background:#d3d3d3"></div>
<div class="a" style="left:0;top:270px;width:1563px;height:0;border-top:1px dotted #d6d6d6"></div>
<div class="t" style="left:0;top:232px;width:45px;text-align:center;font-size:20px">7</div>
<div class="t" style="left:45px;top:215px;width:105px;text-align:center;font-size:20px;line-height:26.4px;color:#000;">Linea76-<br>99</div>
<div class="t" style="left:150px;top:232px;width:45px;text-align:center;font-size:20px;color:#000;">1</div>
<div class="t" style="left:195px;top:232px;width:195px;text-align:center;font-size:20px;color:#000;">92</div>
<div class="t" style="left:390px;top:232px;width:165px;text-align:center;font-size:20px;color:#000;">Movil 92</div>
<div class="t" style="left:555px;top:232px;width:105px;text-align:center;font-size:20px;color:#000;">11:34</div>
<div class="t" style="left:660px;top:232px;width:60px;text-align:center;font-size:20px;color:#000;">-1</div>
<div class="t" style="left:720px;top:232px;width:60px;text-align:center;font-size:20px;color:#000;">0</div>
<div class="t" style="left:780px;top:232px;width:60px;text-align:center;font-size:20px;color:#000;">0</div>
<div class="t" style="left:840px;top:232px;width:60px;text-align:center;font-size:20px;color:#000;">+2</div>
<div class="t" style="left:900px;top:232px;width:60px;text-align:center;font-size:20px;color:#000;">+9</div>
<div class="t" style="left:960px;top:232px;width:60px;text-align:center;font-size:20px;color:#000;">+7</div>
<div class="t" style="left:1020px;top:232px;width:60px;text-align:center;font-size:20px;color:#000;">+9</div>
<div class="t" style="left:1080px;top:232px;width:60px;text-align:center;font-size:20px;color:#000;">+8</div>
<div class="t" style="left:1140px;top:232px;width:60px;text-align:center;font-size:20px;color:#000;">+15</div>
<div class="t" style="left:1200px;top:232px;width:60px;text-align:center;font-size:20px;color:#000;">+50</div>
<div class="t" style="left:1260px;top:232px;width:60px;text-align:center;font-size:20px;color:#000;">-1</div>
<div class="t" style="left:1320px;top:232px;width:60px;text-align:center;font-size:20px;color:#000;">1</div>
<div class="t" style="left:1380px;top:232px;width:105px;text-align:center;font-size:20px;color:#000;">12:44</div>
<div class="t" style="left:1518px;top:232px;font-size:20px;letter-spacing:1.1px;color:#000">Retorno76</div>
<div class="a" style="left:0;top:271px;width:45px;height:57px;background:linear-gradient(90deg,#fafafa,#f3f3f3)"></div>
<div class="a" style="left:45px;top:271px;width:1518px;height:57px;background:#d3d3d3"></div>
<div class="a" style="left:0;top:327px;width:1563px;height:0;border-top:1px dotted #d6d6d6"></div>
<div class="t" style="left:0;top:289px;width:45px;text-align:center;font-size:20px">8</div>
<div class="t" style="left:45px;top:272px;width:105px;text-align:center;font-size:20px;line-height:26.4px;color:#fff;">Linea76-<br>99</div>
<div class="t" style="left:150px;top:289px;width:45px;text-align:center;font-size:20px;color:#fff;">1</div>
<div class="t" style="left:195px;top:289px;width:195px;text-align:center;font-size:20px;color:#fff;">26</div>
<div class="t" style="left:390px;top:289px;width:165px;text-align:center;font-size:20px;color:#fff;">Movil 26</div>
<div class="t" style="left:555px;top:289px;width:105px;text-align:center;font-size:20px;color:#fff;">11:57</div>
<div class="t" style="left:660px;top:289px;width:60px;text-align:center;font-size:20px;color:#fff;">0</div>
<div class="t" style="left:720px;top:289px;width:60px;text-align:center;font-size:20px;color:#fff;">0</div>
<div class="t" style="left:780px;top:289px;width:60px;text-align:center;font-size:20px;color:#fff;">0</div>
<div class="t" style="left:840px;top:289px;width:60px;text-align:center;font-size:20px;color:#fff;">+2</div>
<div class="t" style="left:900px;top:289px;width:60px;text-align:center;font-size:20px;color:#fff;">+4</div>
<div class="t" style="left:960px;top:289px;width:60px;text-align:center;font-size:20px;color:#fff;">+5</div>
<div class="t" style="left:1020px;top:289px;width:60px;text-align:center;font-size:20px;color:#fff;">+4</div>
<div class="t" style="left:1080px;top:289px;width:60px;text-align:center;font-size:20px;color:#fff;">+1</div>
<div class="t" style="left:1140px;top:289px;width:60px;text-align:center;font-size:20px;color:#fff;">+5</div>
<div class="t" style="left:1200px;top:289px;width:60px;text-align:center;font-size:20px;color:#fff;">+21</div>
<div class="t" style="left:1260px;top:289px;width:60px;text-align:center;font-size:20px;color:#fff;"></div>
<div class="t" style="left:1320px;top:289px;width:60px;text-align:center;font-size:20px;color:#fff;">1</div>
<div class="t" style="left:1380px;top:289px;width:105px;text-align:center;font-size:20px;color:#fff;">13:07</div>
<div class="t" style="left:1518px;top:289px;font-size:20px;letter-spacing:1.1px;color:#fff">Retorno76</div>
<div class="a" style="left:0;top:328px;width:45px;height:57px;background:linear-gradient(90deg,#fafafa,#f3f3f3)"></div>
<div class="a" style="left:45px;top:328px;width:1518px;height:57px;background:#d3d3d3"></div>
<div class="a" style="left:0;top:384px;width:1563px;height:0;border-top:1px dotted #d6d6d6"></div>
<div class="t" style="left:0;top:346px;width:45px;text-align:center;font-size:20px">9</div>
<div class="t" style="left:45px;top:329px;width:105px;text-align:center;font-size:20px;line-height:26.4px;color:#000;">Linea76-<br>99</div>
<div class="t" style="left:150px;top:346px;width:45px;text-align:center;font-size:20px;color:#000;">1</div>
<div class="t" style="left:195px;top:346px;width:195px;text-align:center;font-size:20px;color:#000;">36</div>
<div class="t" style="left:390px;top:346px;width:165px;text-align:center;font-size:20px;color:#000;">Movil 36</div>
<div class="t" style="left:555px;top:346px;width:105px;text-align:center;font-size:20px;color:#000;">12:56</div>
<div class="t" style="left:660px;top:346px;width:60px;text-align:center;font-size:20px;color:#000;">+1</div>
<div class="t" style="left:720px;top:346px;width:60px;text-align:center;font-size:20px;color:#000;">+1</div>
<div class="t" style="left:780px;top:346px;width:60px;text-align:center;font-size:20px;color:#000;">0</div>
<div class="t" style="left:840px;top:346px;width:60px;text-align:center;font-size:20px;color:#000;">+1</div>
<div class="t" style="left:900px;top:346px;width:60px;text-align:center;font-size:20px;color:#000;">+2</div>
<div class="t" style="left:960px;top:346px;width:60px;text-align:center;font-size:20px;color:#000;">+7</div>
<div class="t" style="left:1020px;top:346px;width:60px;text-align:center;font-size:20px;color:#000;">+7</div>
<div class="t" style="left:1080px;top:346px;width:60px;text-align:center;font-size:20px;color:#000;">+6</div>
<div class="t" style="left:1140px;top:346px;width:60px;text-align:center;font-size:20px;color:#000;">+13</div>
<div class="t" style="left:1200px;top:346px;width:60px;text-align:center;font-size:20px;color:#000;">+38</div>
<div class="t" style="left:1260px;top:346px;width:60px;text-align:center;font-size:20px;color:#000;"></div>
<div class="t" style="left:1320px;top:346px;width:60px;text-align:center;font-size:20px;color:#000;">1</div>
<div class="t" style="left:1380px;top:346px;width:105px;text-align:center;font-size:20px;color:#000;">14:06</div>
<div class="t" style="left:1518px;top:346px;font-size:20px;letter-spacing:1.1px;color:#000">Retorno76</div>
<div class="a" style="left:0;top:385px;width:45px;height:57px;background:linear-gradient(90deg,#fafafa,#f3f3f3)"></div>
<div class="a" style="left:45px;top:385px;width:1518px;height:57px;background:#d3d3d3"></div>
<div class="a" style="left:0;top:441px;width:1563px;height:0;border-top:1px dotted #d6d6d6"></div>
<div class="t" style="left:0;top:403px;width:45px;text-align:center;font-size:20px">10</div>
<div class="t" style="left:45px;top:386px;width:105px;text-align:center;font-size:20px;line-height:26.4px;color:#000;">Linea76-<br>99</div>
<div class="t" style="left:150px;top:403px;width:45px;text-align:center;font-size:20px;color:#000;">1</div>
<div class="t" style="left:195px;top:403px;width:195px;text-align:center;font-size:20px;color:#000;">60</div>
<div class="t" style="left:390px;top:403px;width:165px;text-align:center;font-size:20px;color:#000;">Movil 60</div>
<div class="t" style="left:555px;top:403px;width:105px;text-align:center;font-size:20px;color:#000;">13:16</div>
<div class="t" style="left:660px;top:403px;width:60px;text-align:center;font-size:20px;color:#000;">0</div>
<div class="t" style="left:720px;top:403px;width:60px;text-align:center;font-size:20px;color:#000;">+1</div>
<div class="t" style="left:780px;top:403px;width:60px;text-align:center;font-size:20px;color:#000;">0</div>
<div class="t" style="left:840px;top:403px;width:60px;text-align:center;font-size:20px;color:#000;">+2</div>
<div class="t" style="left:900px;top:403px;width:60px;text-align:center;font-size:20px;color:#000;">+4</div>
<div class="t" style="left:960px;top:403px;width:60px;text-align:center;font-size:20px;color:#000;">+6</div>
<div class="t" style="left:1020px;top:403px;width:60px;text-align:center;font-size:20px;color:#000;">+7</div>
<div class="t" style="left:1080px;top:403px;width:60px;text-align:center;font-size:20px;color:#000;">+6</div>
<div class="t" style="left:1140px;top:403px;width:60px;text-align:center;font-size:20px;color:#000;">+11</div>
<div class="t" style="left:1200px;top:403px;width:60px;text-align:center;font-size:20px;color:#000;">+37</div>
<div class="t" style="left:1260px;top:403px;width:60px;text-align:center;font-size:20px;color:#000;"></div>
<div class="t" style="left:1320px;top:403px;width:60px;text-align:center;font-size:20px;color:#000;">1</div>
<div class="t" style="left:1380px;top:403px;width:105px;text-align:center;font-size:20px;color:#000;">14:26</div>
<div class="t" style="left:1518px;top:403px;font-size:20px;letter-spacing:1.1px;color:#000">Retorno76</div>
<div class="a" style="left:0;top:442px;width:45px;height:57px;background:linear-gradient(90deg,#fafafa,#f3f3f3)"></div>
<div class="a" style="left:45px;top:442px;width:1518px;height:57px;background:#d3d3d3"></div>
<div class="a" style="left:0;top:498px;width:1563px;height:0;border-top:1px dotted #d6d6d6"></div>
<div class="t" style="left:0;top:460px;width:45px;text-align:center;font-size:20px">11</div>
<div class="t" style="left:45px;top:443px;width:105px;text-align:center;font-size:20px;line-height:26.4px;color:#000;">Linea76-<br>99</div>
<div class="t" style="left:150px;top:460px;width:45px;text-align:center;font-size:20px;color:#000;">1</div>
<div class="t" style="left:195px;top:460px;width:195px;text-align:center;font-size:20px;color:#000;">22</div>
<div class="t" style="left:390px;top:460px;width:165px;text-align:center;font-size:20px;color:#000;">Movil 22</div>
<div class="t" style="left:555px;top:460px;width:105px;text-align:center;font-size:20px;color:#000;">14:17</div>
<div class="t" style="left:660px;top:460px;width:60px;text-align:center;font-size:20px;color:#000;">0</div>
<div class="t" style="left:720px;top:460px;width:60px;text-align:center;font-size:20px;color:#000;">+1</div>
<div class="t" style="left:780px;top:460px;width:60px;text-align:center;font-size:20px;color:#000;">0</div>
<div class="t" style="left:840px;top:460px;width:60px;text-align:center;font-size:20px;color:#000;">+2</div>
<div class="t" style="left:900px;top:460px;width:60px;text-align:center;font-size:20px;color:#000;">+4</div>
<div class="t" style="left:960px;top:460px;width:60px;text-align:center;font-size:20px;color:#000;">+7</div>
<div class="t" style="left:1020px;top:460px;width:60px;text-align:center;font-size:20px;color:#000;">+7</div>
<div class="t" style="left:1080px;top:460px;width:60px;text-align:center;font-size:20px;color:#000;">+5</div>
<div class="t" style="left:1140px;top:460px;width:60px;text-align:center;font-size:20px;color:#000;">+8</div>
<div class="t" style="left:1200px;top:460px;width:60px;text-align:center;font-size:20px;color:#000;">+34</div>
<div class="t" style="left:1260px;top:460px;width:60px;text-align:center;font-size:20px;color:#000;"></div>
<div class="t" style="left:1320px;top:460px;width:60px;text-align:center;font-size:20px;color:#000;">1</div>
<div class="t" style="left:1380px;top:460px;width:105px;text-align:center;font-size:20px;color:#000;">15:27</div>
<div class="t" style="left:1518px;top:460px;font-size:20px;letter-spacing:1.1px;color:#000">Retorno76</div>
<div class="a" style="left:149px;top:0;width:0;height:99px;border-left:1px dotted rgba(255,255,255,0.6)"></div>
<div class="a" style="left:194px;top:0;width:0;height:99px;border-left:1px dotted rgba(255,255,255,0.6)"></div>
<div class="a" style="left:389px;top:0;width:0;height:99px;border-left:1px dotted rgba(255,255,255,0.6)"></div>
<div class="a" style="left:554px;top:0;width:0;height:99px;border-left:1px dotted rgba(255,255,255,0.6)"></div>
<div class="a" style="left:659px;top:0;width:0;height:99px;border-left:1px dotted rgba(255,255,255,0.6)"></div>
<div class="a" style="left:719px;top:0;width:0;height:99px;border-left:1px dotted rgba(255,255,255,0.6)"></div>
<div class="a" style="left:779px;top:0;width:0;height:99px;border-left:1px dotted rgba(255,255,255,0.6)"></div>
<div class="a" style="left:839px;top:0;width:0;height:99px;border-left:1px dotted rgba(255,255,255,0.6)"></div>
<div class="a" style="left:899px;top:0;width:0;height:99px;border-left:1px dotted rgba(255,255,255,0.6)"></div>
<div class="a" style="left:959px;top:0;width:0;height:99px;border-left:1px dotted rgba(255,255,255,0.6)"></div>
<div class="a" style="left:1019px;top:0;width:0;height:99px;border-left:1px dotted rgba(255,255,255,0.6)"></div>
<div class="a" style="left:1079px;top:0;width:0;height:99px;border-left:1px dotted rgba(255,255,255,0.6)"></div>
<div class="a" style="left:1139px;top:0;width:0;height:99px;border-left:1px dotted rgba(255,255,255,0.6)"></div>
<div class="a" style="left:1199px;top:0;width:0;height:99px;border-left:1px dotted rgba(255,255,255,0.6)"></div>
<div class="a" style="left:1259px;top:0;width:0;height:99px;border-left:1px dotted rgba(255,255,255,0.6)"></div>
<div class="a" style="left:1319px;top:0;width:0;height:99px;border-left:1px dotted rgba(255,255,255,0.6)"></div>
<div class="a" style="left:1379px;top:0;width:0;height:99px;border-left:1px dotted rgba(255,255,255,0.6)"></div>
<div class="a" style="left:1484px;top:0;width:0;height:99px;border-left:1px dotted rgba(255,255,255,0.6)"></div>
<div class="a" style="left:44px;top:0;width:0;height:486px;border-left:1px dotted #c8c8c8"></div>
</div>
<div class="a" style="left:45px;top:637px;width:1518px;height:9px;background:#2196f3"></div>
</div>
<div class="t" style="left:1405px;top:911px;font-size:31px;color:rgba(120,120,120,0.45)">激活 Windows</div>
<div class="t" style="left:1405px;top:952px;font-size:22px;color:rgba(120,120,120,0.45)">转到“控制面板”中的“系统”以激活 Windows。</div>
<div class="a" style="left:0px;top:1014px;width:1920px;height:10px;background:#fff"></div>
<div class="a" style="left:1620px;top:1014px;width:300px;height:1px;background:#d0d0d0"></div>
<div class="a" style="left:4px;top:1015px;width:1616px;height:9px;background:#2196f3"></div>
<div class="a" style="left:0px;top:1015px;width:4px;height:9px;background:#fff"></div>
<div class="a" style="left:0px;top:1024px;width:1920px;height:56px;background:#67cbea"></div>
<div class="a" style="left:0px;top:1024px;width:1920px;height:1px;background:#24404c"></div>
<div class="a" style="left:0px;top:1079px;width:1920px;height:1px;background:#2e5666"></div>
<div class="a" style="left:0px;top:1025px;width:2px;height:54px;background:#8fd8ef"></div>
<div class="a" style="left:3px;top:1025px;width:71px;height:54px;background:#71ceeb;border-top:1px solid #9edff3"></div>
<div class="a" style="left:75px;top:1025px;width:82px;height:54px;background:#71ceeb;border-top:1px solid #9edff3"></div>
<div class="a" style="left:158px;top:1025px;width:88px;height:54px;background:#71ceeb;border-top:1px solid #9edff3"></div>
<div class="a" style="left:247px;top:1025px;width:85px;height:54px;background:#71ceeb;border-top:1px solid #9edff3"></div>
<div class="a" style="left:333px;top:1025px;width:83px;height:54px;background:#71ceeb;border-top:1px solid #9edff3"></div>
<div class="a" style="left:417px;top:1025px;width:87px;height:54px;background:#71ceeb;border-top:1px solid #9edff3"></div>
<div class="a" style="left:588px;top:1025px;width:88px;height:54px;background:#71ceeb;border-top:1px solid #9edff3"></div>
<div class="a" style="left:677px;top:1025px;width:83px;height:54px;background:#71ceeb;border-top:1px solid #9edff3"></div>
<div class="a" style="left:849px;top:1025px;width:83px;height:54px;background:#71ceeb;border-top:1px solid #9edff3"></div>
<div class="a" style="left:935px;top:1025px;width:78px;height:54px;background:#71ceeb;border-top:1px solid #9edff3"></div>
<div class="a" style="left:1014px;top:1025px;width:3px;height:54px;background:#71ceeb;border-top:1px solid #9edff3"></div>
<div class="a" style="left:2px;top:1025px;width:1px;height:54px;background:#24404c"></div>
<div class="a" style="left:74px;top:1025px;width:1px;height:54px;background:#24404c"></div>
<div class="a" style="left:157px;top:1025px;width:1px;height:54px;background:#24404c"></div>
<div class="a" style="left:246px;top:1025px;width:1px;height:54px;background:#24404c"></div>
<div class="a" style="left:330px;top:1025px;width:1px;height:54px;background:#24404c"></div>
<div class="a" style="left:332px;top:1025px;width:1px;height:54px;background:#24404c"></div>
<div class="a" style="left:416px;top:1025px;width:1px;height:54px;background:#24404c"></div>
<div class="a" style="left:504px;top:1025px;width:1px;height:54px;background:#24404c"></div>
<div class="a" style="left:587px;top:1025px;width:1px;height:54px;background:#24404c"></div>
<div class="a" style="left:676px;top:1025px;width:1px;height:54px;background:#24404c"></div>
<div class="a" style="left:760px;top:1025px;width:1px;height:54px;background:#24404c"></div>
<div class="a" style="left:762px;top:1025px;width:1px;height:54px;background:#24404c"></div>
<div class="a" style="left:845px;top:1025px;width:1px;height:54px;background:#24404c"></div>
<div class="a" style="left:848px;top:1025px;width:1px;height:54px;background:#24404c"></div>
<div class="a" style="left:932px;top:1025px;width:1px;height:54px;background:#24404c"></div>
<div class="a" style="left:934px;top:1025px;width:1px;height:54px;background:#24404c"></div>
<div class="a" style="left:1013px;top:1025px;width:1px;height:54px;background:#24404c"></div>
<div class="a" style="left:1017px;top:1025px;width:1px;height:54px;background:#24404c"></div>
<div class="a" style="left:505px;top:1025px;width:82px;height:54px;background:#9adcf2;border-top:1px solid #c0ebf8"></div>
<div class="a" style="left:763px;top:1025px;width:82px;height:54px;background:linear-gradient(#78c2ee,#5caee8 65%,#86ccf2);box-shadow:inset 0 0 0 2px rgba(140,210,250,0.6)"></div>
<svg class="a" style="left:16px;top:1030px" width="44" height="44"><path d="M0 6L17 3.8V20.5H0Z M19.5 3.5L43 0V20.5H19.5Z M0 23H17V39.5L0 37.5Z M19.5 23H43V43.5L19.5 40Z" fill="#fff"/></svg>
<svg class="a" style="left:91px;top:1030px" width="50" height="47"><rect x="1.5" y="1.5" width="22" height="42" fill="#1e88d8" stroke="#fff" stroke-width="1.2"/><rect x="1.5" y="11" width="22" height="1.5" fill="#fff"/><rect x="15" y="24" width="12" height="6" rx="1" fill="none" stroke="#fff" stroke-width="1.6"/><rect x="10.5" y="27" width="38" height="18.5" rx="2" fill="#7b8c9c" stroke="#fff" stroke-width="1.4"/><path d="M15 34H44" stroke="#fff" stroke-width="1.2"/><rect x="18" y="32" width="3" height="5" rx="1.5" fill="none" stroke="#fff"/><rect x="38" y="32" width="3" height="5" rx="1.5" fill="none" stroke="#fff"/></svg>
<svg class="a" style="left:182px;top:1034px" width="44" height="34"><defs><linearGradient id="ps" x1="0" y1="0" x2="1" y2="1"><stop offset="0" stop-color="#5aa9de"/><stop offset="1" stop-color="#1a5fa8"/></linearGradient></defs><path d="M9 2H40Q42 2 41.5 4L34 30Q33.3 32 31 32H3Q1 32 1.6 30L7 4Q7.6 2 9 2Z" fill="url(#ps)" stroke="#1d4f86" stroke-width="1"/><path d="M12 8L22 15L10 23" stroke="#fff" stroke-width="3" fill="none" stroke-linecap="round"/><path d="M20 24H28" stroke="#cde" stroke-width="2.5" stroke-linecap="round"/></svg>
<svg class="a" style="left:250px;top:1024px" width="80" height="56"><defs><linearGradient id="fb" x1="0" y1="0" x2="1" y2="1"><stop offset="0" stop-color="#fbf0b8"/><stop offset="1" stop-color="#efcf5c"/></linearGradient><linearGradient id="fw" x1="0" y1="0" x2="0.3" y2="1"><stop offset="0" stop-color="#d4f3fc"/><stop offset="1" stop-color="#4d9fd8"/></linearGradient></defs><path d="M17 16V8Q17 5 20 5H36Q38 5 38.5 7L39 8H47Q49 8 49.5 10L50 11H60Q62 11 62 13V16Z" fill="#e9c55e" stroke="#c9a040" stroke-width="0.8"/><rect x="19.5" y="6.5" width="14" height="4.5" fill="#fffbe8"/><rect x="21" y="7" width="2.8" height="2.8" fill="#2a9a2a"/><rect x="31" y="9.5" width="14" height="4.5" fill="#fffbe8"/><rect x="32.5" y="10" width="2.8" height="2.8" fill="#d03a20"/><rect x="43" y="12.5" width="14" height="4.5" fill="#fffbe8"/><rect x="44.5" y="13" width="2.8" height="2.8" fill="#2a80b8"/><path d="M16 15H41L43 17H61.5V46Q61.5 47.5 60 47.5H17Q15.6 47.5 15.6 46Z" fill="url(#fb)" stroke="#d3a84a" stroke-width="0.8"/><path d="M20.5 50.5V34Q20.5 32 22.5 32H54Q56.2 32 56.2 34V50.5H46V44Q46 42.2 44.5 42.2H32Q30.8 42.2 30.8 44V50.5Z" fill="url(#fw)" stroke="#3d8fcb" stroke-width="0.6"/></svg>
<svg class="a" style="left:338px;top:1024px" width="70" height="56"><defs><radialGradient id="ie" cx="0.45" cy="0.45" r="0.6"><stop offset="0" stop-color="#9ef3ff"/><stop offset="0.6" stop-color="#4cc6f2"/><stop offset="1" stop-color="#1e8fd2"/></radialGradient></defs><circle cx="37.5" cy="28.3" r="20.5" fill="url(#ie)" stroke="#1a78b8" stroke-width="1"/><path d="M28.3 25.4A9.3 9.4 0 0 1 46.9 25.4Z" fill="#74cbe9" stroke="#1a78b8" stroke-width="0.8"/><path d="M28.3 31.4H59V35.8H45.5C43 39 40.5 40.4 37 40.4C32 40.4 28.3 36.5 28.3 31.4Z" fill="#74cbe9" stroke="#1a78b8" stroke-width="0.8"/><path d="M26 47C18 50 12 48 14 42C17 32 26 20 38 12C48 6 56 4 57.5 9C58 11 57.6 13 57 15" fill="none" stroke="#f5c81a" stroke-width="3.6" stroke-linecap="round"/></svg>
<svg class="a" style="left:425px;top:1024px" width="80" height="56"><defs><linearGradient id="rs" x1="0" y1="0" x2="1" y2="0.3"><stop offset="0" stop-color="#1a22c8"/><stop offset="0.45" stop-color="#0a18d8"/><stop offset="0.47" stop-color="#c8d4fa"/><stop offset="1" stop-color="#8090f0"/></linearGradient></defs><path d="M17 4.5L54 9.5L51 32L13.5 34Z" fill="#e8ecf2" stroke="#b8c0cc" stroke-width="0.8"/><path d="M18 6.5L51 10.5L49 29.5L15.5 31.5Z" fill="url(#rs)"/><ellipse cx="32" cy="44" rx="11" ry="5" fill="#dadde2"/><path d="M29 34H35L36 40H28Z" fill="#d0d4da"/><circle cx="47" cy="39.5" r="11" fill="#f2f3f5" stroke="#9aa0a8" stroke-width="0.8"/><path d="M41.5 38.5L45.5 41L41.5 44.5M52.5 34.5L48.5 38L52.5 40.5" stroke="#2e9a2e" stroke-width="2.4" fill="none"/></svg>
<svg class="a" style="left:523px;top:1029px" width="46" height="46"><circle cx="23" cy="23" r="22" fill="#2ba24c"/><path d="M23 23L4 12A22 22 0 0 1 42 12Z" fill="#e33b2e"/><path d="M23 23L42 12A22 22 0 0 1 12 42.1Z" fill="#fbc02d"/><path d="M4 12L14 29L23 23Z" fill="#2ba24c"/><circle cx="23" cy="23" r="10" fill="#fff"/><circle cx="23" cy="23" r="8" fill="#3b7ddd"/></svg>
<svg class="a" style="left:600px;top:1024px" width="70" height="56"><defs><radialGradient id="ff" cx="0.75" cy="0.25" r="0.9"><stop offset="0" stop-color="#fff23a"/><stop offset="0.35" stop-color="#ffb62a"/><stop offset="0.7" stop-color="#ff4a3a"/><stop offset="1" stop-color="#e0126a"/></radialGradient><linearGradient id="fg" x1="0" y1="0" x2="0" y2="1"><stop offset="0" stop-color="#b44cf0"/><stop offset="1" stop-color="#5b3fd6"/></linearGradient></defs><path d="M30 12C33 8 36 5 38.6 3.9C42 9 48 14 51 17C54 22 54.2 26 54.2 28.5A22 21.3 0 1 1 10 26C10 18 14 14 17 12L18.5 16L22.8 14L25 18Z" fill="url(#ff)"/><circle cx="31.5" cy="27" r="9.8" fill="url(#fg)"/><path d="M16 22C20 21 26 22 31 24C27 26 24 27 22 29C20 26 18 24 16 22Z" fill="#ffb02a"/></svg>
<svg class="a" style="left:680px;top:1024px" width="80" height="56"><defs><linearGradient id="cp" x1="0" y1="0" x2="1" y2="1"><stop offset="0" stop-color="#8cc4ec"/><stop offset="1" stop-color="#3d8ad6"/></linearGradient></defs><rect x="14.3" y="11.1" width="47.4" height="33.5" rx="1.5" fill="#2f7cc4"/><rect x="15.6" y="12.3" width="44.8" height="31" fill="url(#cp)" stroke="#bfe6fb" stroke-width="0.9"/><circle cx="26.4" cy="22.3" r="6.8" fill="none" stroke="#e8f8ff" stroke-width="1.3"/><path d="M26.4 15.5A6.8 6.8 0 0 1 33.2 22.3H26.4Z" fill="#f5a83a"/><g stroke="#e8fbff" stroke-width="0.9"><rect x="38.3" y="18.3" width="18" height="3.6" rx="1.8" fill="#2a7ab8"/><rect x="38.3" y="24.1" width="18" height="3.6" rx="1.8" fill="#2a7ab8"/><rect x="38.3" y="30.1" width="18" height="3.6" rx="1.8" fill="#2a7ab8"/></g><circle cx="22.3" cy="34.2" r="1.1" fill="#9ff"/><circle cx="26.4" cy="34.2" r="1.1" fill="#9ff"/><circle cx="30.6" cy="34.2" r="1.1" fill="#fd6"/><path d="M27.7 49.5C28 42 32 38 38 38C44 38 48 42 48.7 49.5Q38 52 27.7 49.5Z" fill="#e8e8e8" stroke="#a0a0a0" stroke-width="0.7"/></svg>
<svg class="a" style="left:780px;top:1028px" width="48" height="48"><defs><linearGradient id="tv" x1="0" y1="0" x2="0" y2="1"><stop offset="0" stop-color="#1290e8"/><stop offset="1" stop-color="#0a66d0"/></linearGradient></defs><rect x="0" y="0" width="48" height="48" rx="3" fill="url(#tv)"/><circle cx="24" cy="24" r="19.7" fill="#fff"/><path d="M7 24L18.6 17.8V21.4H29.2V17.8L41.2 24L29.2 30.2V26.6H18.6V30.2Z" fill="#0e6ed6"/></svg>
<svg class="a" style="left:866px;top:1032px" width="48" height="46"><path d="M2 8L10 5V36L2 38Z" fill="#dfe3e6" stroke="#9aa"/><rect x="3" y="10" width="2" height="2" fill="#4c4"/><path d="M10 4L44 0V30L10 34Z" fill="#eef3f6" stroke="#aab3bb"/><path d="M12 6L42 3V28L12 31Z" fill="#dbeefa"/><path d="M13 20L18 19L21 10L24 24L27 14L30 20L34 16L40 18" stroke="#2f80c8" stroke-width="1.2" fill="none"/><path d="M20 36L34 34L38 42L16 44Z" fill="#d0d4d8"/></svg>
<svg class="a" style="left:950px;top:1033px" width="46" height="37"><rect x="0.5" y="0.5" width="44" height="35" fill="#000" stroke="#aaa"/><rect x="0.5" y="0.5" width="44" height="4" fill="#ddd"/><path d="M2 5H42Q30 12 2 16Z" fill="#3a3a3a"/><text x="3" y="13" font-size="8" fill="#eee" font-family="Liberation Mono">C:\_</text></svg>
<svg class="a" style="left:1613px;top:1050px" width="13" height="7"><path d="M0 6.5L6.5 0L13 6.5Z" fill="#111"/></svg>
<svg class="a" style="left:1630px;top:1035px" width="120" height="35"><path d="M12.5 12.5H16.3L22.5 7.2H23.4V29.4H22.5L16.3 23H12.5Z" fill="#fbfbfb" stroke="#163040" stroke-width="1"/><rect x="15.6" y="12.8" width="1" height="10" fill="#777"/><circle cx="29.4" cy="23.8" r="5.8" fill="#d81818" stroke="#7a1010" stroke-width="0.6"/><path d="M27.2 21.6L31.6 26M31.6 21.6L27.2 26" stroke="#fff" stroke-width="1.7"/><g fill="none" stroke-linejoin="round"><g stroke="#163040" stroke-width="3.6"><rect x="49.2" y="6.8" width="5.4" height="7.4" rx="1.6"/><path d="M51.9 14.2V27.4"/><rect x="56.3" y="9.3" width="14.2" height="12.4"/><path d="M61 21.7V26.2M55.5 26.6H66"/></g><g stroke="#fff" stroke-width="1.7"><rect x="49.2" y="6.8" width="5.4" height="7.4" rx="1.6"/><path d="M51.9 14.2V27.4"/><rect x="56.3" y="9.3" width="14.2" height="12.4"/><path d="M61 21.7V26.2M55.5 26.6H66"/></g></g><path d="M86.5 6.5V29.2" stroke="#163040" stroke-width="3"/><path d="M86.5 6.5V29.2" stroke="#fff" stroke-width="1.4"/><path d="M87.5 7.2C92 6.2 96 7 98.5 9.5C99.5 12 99 15.5 100.5 16.5C102 17 105 14.8 107.3 13.2C107 17 105 20.5 102.5 21.5C100 22 98.5 20 96 19.5C93 19 90 19.5 87.5 20.5Z" fill="#f8f8f8" stroke="#163040" stroke-width="0.9"/></svg>
<div class="t" style="left:1756px;top:1044px;font-size:19.5px;color:#111;letter-spacing:0px">ENG</div>
<div class="t" style="left:1835px;top:1031px;font-size:18.5px;color:#111;letter-spacing:0.6px">16:10</div>
<div class="t" style="left:1813px;top:1056px;font-size:19.5px;color:#111;letter-spacing:0.5px">2022/7/12</div>
</body></html>
